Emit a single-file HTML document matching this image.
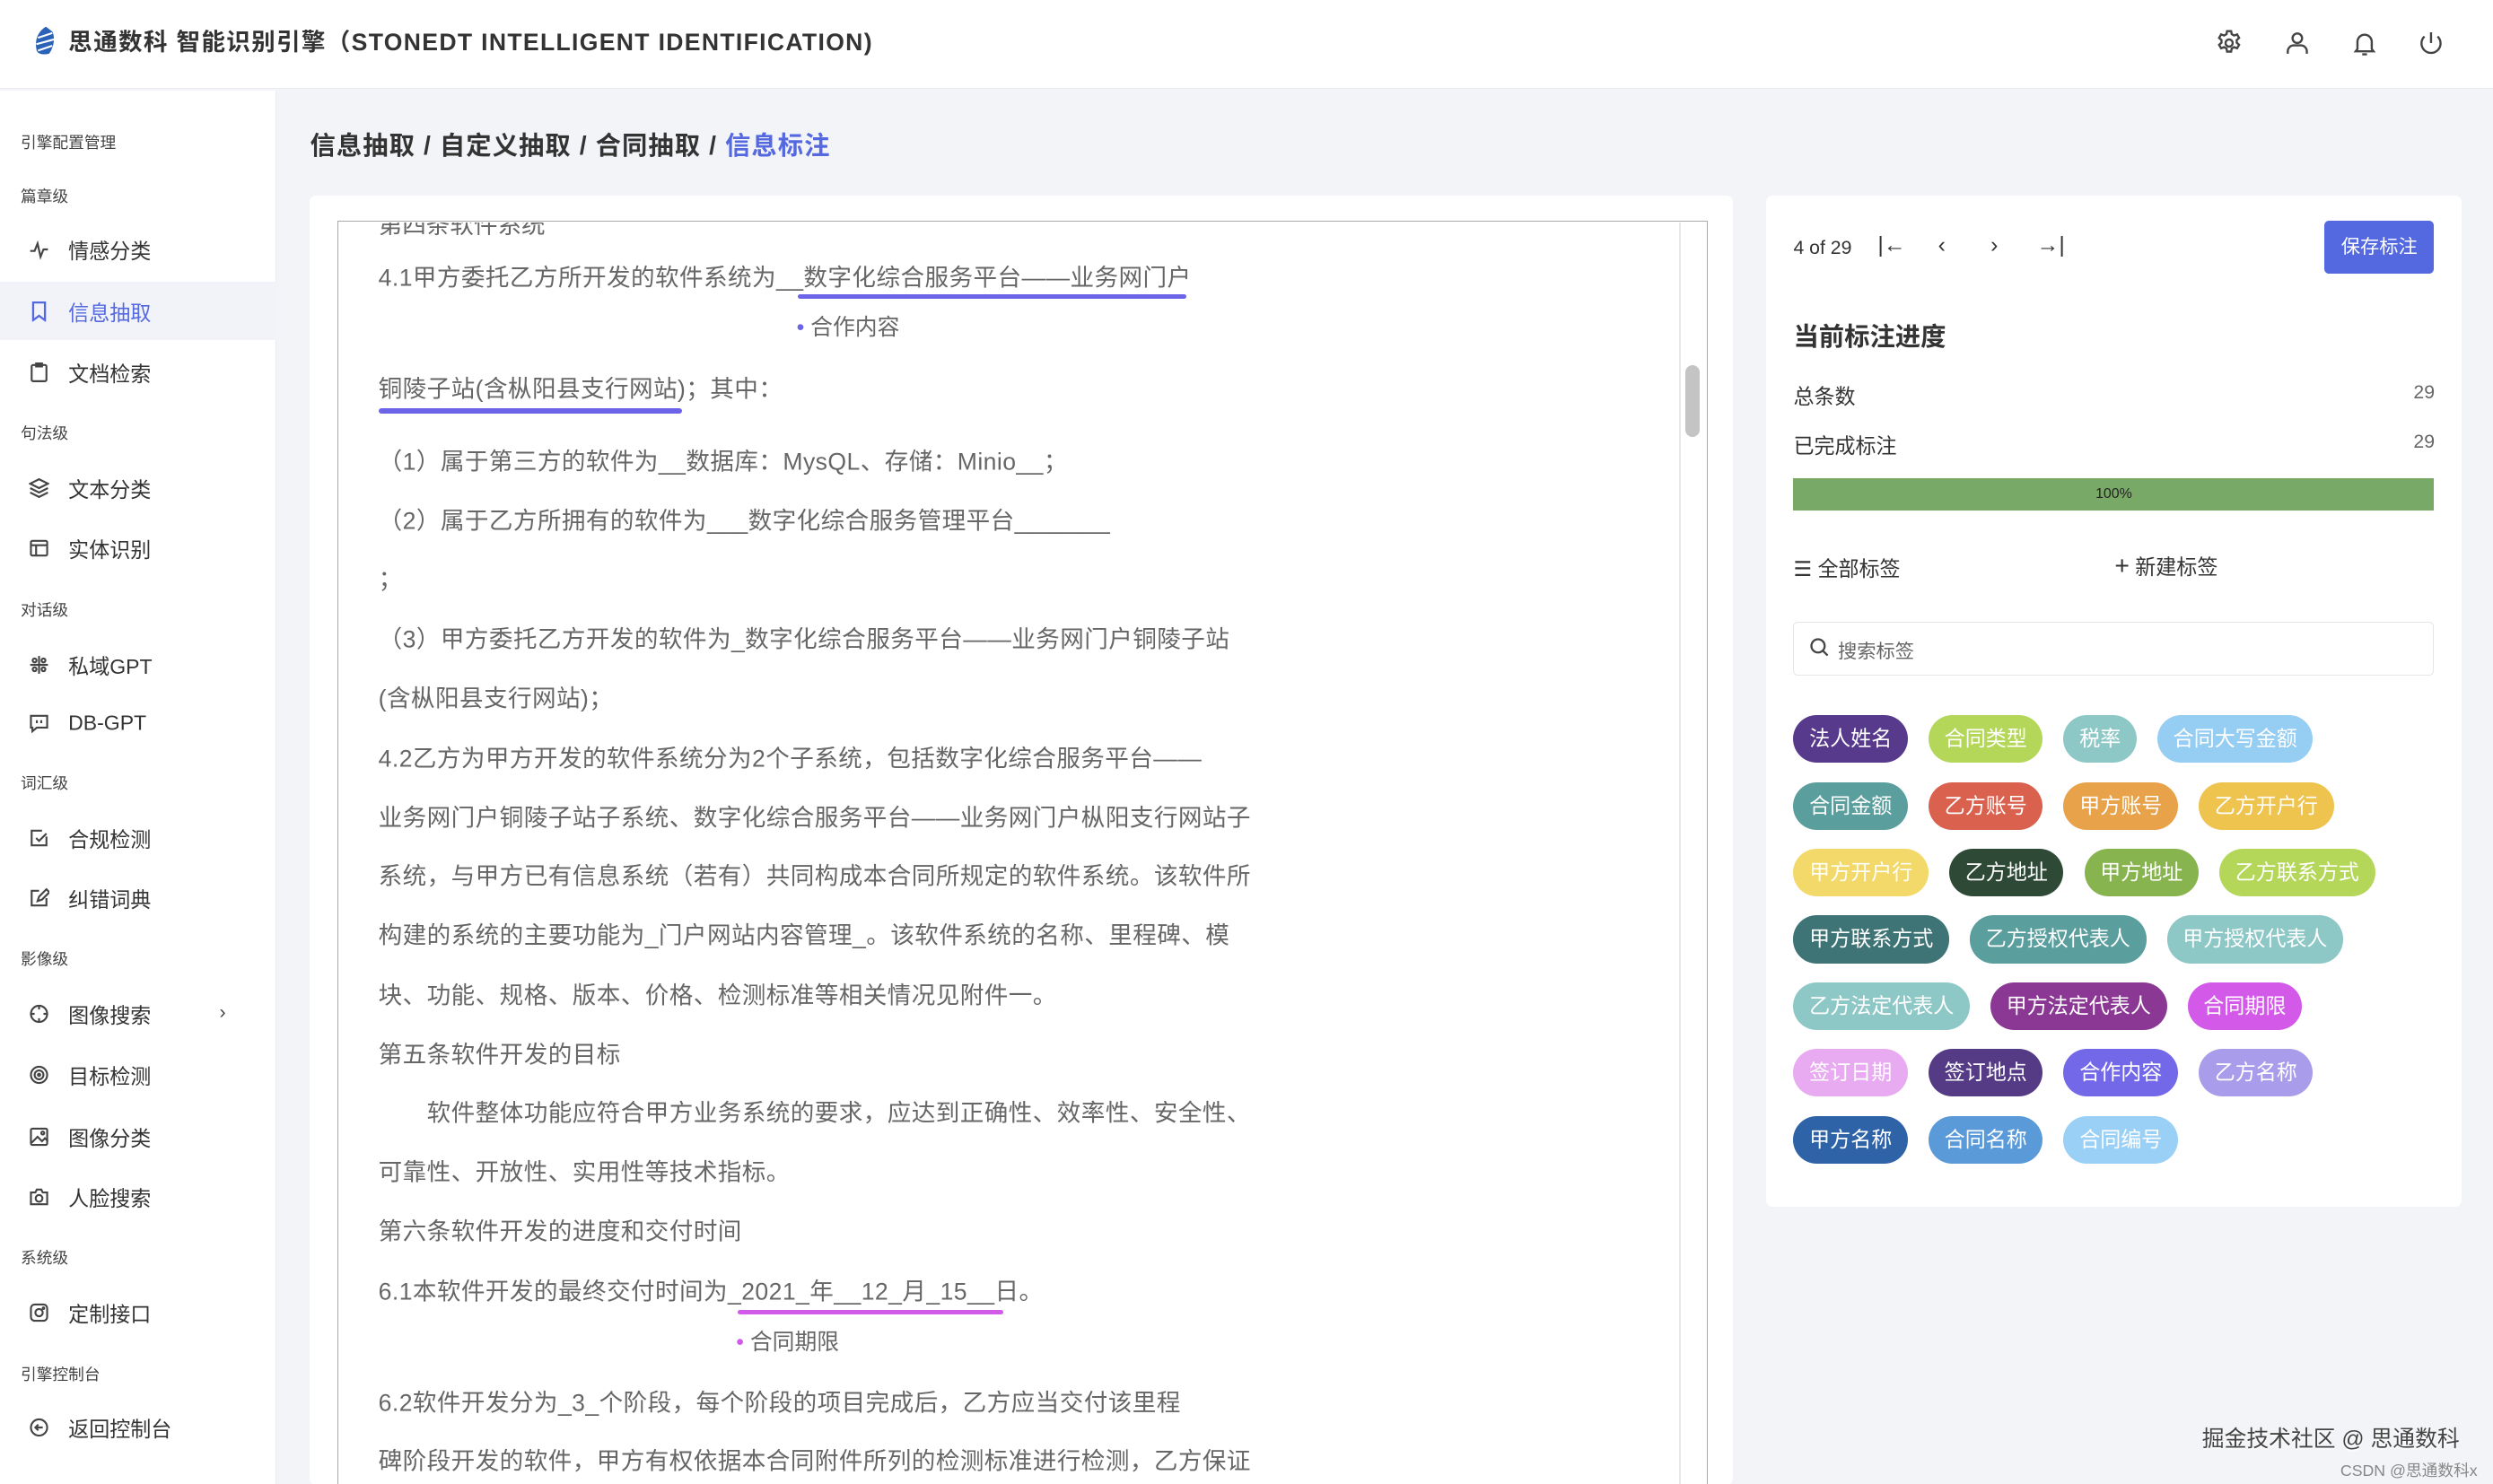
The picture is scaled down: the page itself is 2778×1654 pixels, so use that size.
<!DOCTYPE html>
<html><head><meta charset="utf-8"><style>
*{margin:0;padding:0;box-sizing:border-box}
html,body{width:2778px;height:1654px;overflow:hidden;background:#f3f4f8}
#w{width:1568px;height:934px;zoom:1.77168;position:relative;font-family:"Liberation Sans","Noto Sans CJK SC",sans-serif;background:#f3f4f8;overflow:hidden}
.a{position:absolute;white-space:nowrap}
#hd{position:absolute;left:0;top:0;width:1568px;height:56px;background:#fff;border-bottom:1px solid #ececf0}
#sb{position:absolute;left:0;top:57px;width:174px;height:877px;background:#fff;border-right:1px solid #ececf0}
.sec{position:absolute;left:13px;font-size:10px;color:#444;transform:translateY(-50%)}
.it{position:absolute;left:43px;font-size:13px;color:#333;transform:translateY(-50%)}
.ic{position:absolute;left:18px;width:13px;height:13px;transform:translateY(-50%)}
.t{position:absolute;left:238px;font-size:15px;color:#666;transform:translateY(-50%);white-space:nowrap;letter-spacing:0.25px}
.tag{display:inline-block;height:30px;line-height:30px;padding:0 10px;border-radius:15px;color:#fff;font-size:13px;margin:0 13px 12px 0}
</style></head><body><div id="w">
<div id="hd">
<svg class="a" style="left:21px;top:16px" width="15" height="20" viewBox="0 0 15 20"><path d="M8 1 C3 4 1 9 2 15 C2 18 6 19 10 18 C13 14 14 8 12 4 Z" fill="#2a62b8"/><path d="M3 8 L12 5 M2 12 L13 9 M3 16 L12 13" stroke="#fff" stroke-width="1.2"/></svg>
<div class="a" style="left:43px;top:14px;font-size:15px;color:#333;font-weight:bold;letter-spacing:0.75px">思通数科 智能识别引擎（STONEDT INTELLIGENT IDENTIFICATION)</div>
<svg class="a" style="left:1393px;top:18px" width="18" height="18" viewBox="0 0 24 24" fill="none" stroke="#444" stroke-width="1.8"><circle cx="12" cy="12" r="3"/><path d="M10.3 2h3.4l.5 2.6 2 1.1 2.5-.9 1.7 2.9-2 1.8v2.2l2 1.8-1.7 2.9-2.5-.9-2 1.1-.5 2.6h-3.4l-.5-2.6-2-1.1-2.5.9-1.7-2.9 2-1.8v-2.2l-2-1.8 1.7-2.9 2.5.9 2-1.1z"/></svg>
<svg class="a" style="left:1436px;top:18px" width="18" height="18" viewBox="0 0 24 24" fill="none" stroke="#444" stroke-width="1.8"><circle cx="12" cy="8" r="4"/><path d="M4 21v-2a5 5 0 0 1 5-5h6a5 5 0 0 1 5 5v2"/></svg>
<svg class="a" style="left:1478px;top:18px" width="18" height="18" viewBox="0 0 24 24" fill="none" stroke="#444" stroke-width="1.8"><path d="M6 17V11a6 6 0 0 1 12 0v6l1.5 2h-15z"/><path d="M10 21.5h4"/></svg>
<svg class="a" style="left:1520px;top:18px" width="18" height="18" viewBox="0 0 24 24" fill="none" stroke="#444" stroke-width="1.8"><path d="M12 3v9"/><path d="M6.5 6.5a8 8 0 1 0 11 0"/></svg>
</div>
<div id="sb"></div>
<div class="a" style="left:0;top:177px;width:174px;height:37px;background:#f1f3f9"></div>
<div class="sec" style="top:89px">引擎配置管理</div>
<div class="sec" style="top:123px">篇章级</div>
<svg class="ic" style="top:157px" viewBox="0 0 14 14" fill="none" stroke="#444" stroke-width="1.3"><path d="M1 8h3l2-5 2 9 2-5h3"/></svg><div class="it" style="top:157px">情感分类</div>
<svg class="ic" style="top:196px" viewBox="0 0 14 14" fill="none" stroke="#5468e0" stroke-width="1.4"><path d="M3 1h8v12l-4-3-4 3z"/></svg><div class="it" style="top:196px;color:#5468e0">信息抽取</div>
<svg class="ic" style="top:234px" viewBox="0 0 14 14" fill="none" stroke="#444" stroke-width="1.3"><rect x="2" y="2" width="10" height="11" rx="1"/><path d="M5 1h4v2H5z"/></svg><div class="it" style="top:234px">文档检索</div>
<div class="sec" style="top:272px">句法级</div>
<svg class="ic" style="top:307px" viewBox="0 0 14 14" fill="none" stroke="#444" stroke-width="1.3"><path d="M7 1l6 3-6 3-6-3z M1 7l6 3 6-3 M1 10l6 3 6-3"/></svg><div class="it" style="top:307px">文本分类</div>
<svg class="ic" style="top:345px" viewBox="0 0 14 14" fill="none" stroke="#444" stroke-width="1.3"><rect x="1.5" y="2" width="11" height="10" rx="1"/><path d="M1.5 5h11M5 5v7"/></svg><div class="it" style="top:345px">实体识别</div>
<div class="sec" style="top:383px">对话级</div>
<svg class="ic" style="top:418px" viewBox="0 0 14 14" fill="none" stroke="#444" stroke-width="1.3"><circle cx="4" cy="4" r="1.3"/><circle cx="10" cy="4" r="1.3"/><circle cx="4" cy="10" r="1.3"/><circle cx="10" cy="10" r="1.3"/><path d="M7 1v12M1 7h12"/></svg><div class="it" style="top:418px">私域GPT</div>
<svg class="ic" style="top:455px" viewBox="0 0 14 14" fill="none" stroke="#444" stroke-width="1.3"><path d="M1.5 2h11v8h-7l-3 2.5v-2.5h-1z"/><path d="M5.5 5v2M8.5 5v2"/></svg><div class="it" style="top:455px">DB-GPT</div>
<div class="sec" style="top:492px">词汇级</div>
<svg class="ic" style="top:527px" viewBox="0 0 14 14" fill="none" stroke="#444" stroke-width="1.3"><path d="M12 6v6H2V2h7"/><path d="M5 7l2 2 5-5"/></svg><div class="it" style="top:527px">合规检测</div>
<svg class="ic" style="top:565px" viewBox="0 0 14 14" fill="none" stroke="#444" stroke-width="1.3"><path d="M12 7v5H2V2h5"/><path d="M6 9l1-3 5-5 2 2-5 5z"/></svg><div class="it" style="top:565px">纠错词典</div>
<div class="sec" style="top:603px">影像级</div>
<svg class="ic" style="top:638px" viewBox="0 0 14 14" fill="none" stroke="#444" stroke-width="1.3"><circle cx="7" cy="7" r="5.5"/><path d="M7 1v3M7 10v3M1 7h3M10 7h3"/></svg><div class="it" style="top:638px">图像搜索</div>
<div class="a" style="left:138px;top:630px;font-size:12px;color:#444">›</div>
<svg class="ic" style="top:676px" viewBox="0 0 14 14" fill="none" stroke="#444" stroke-width="1.3"><circle cx="7" cy="7" r="5.5"/><circle cx="7" cy="7" r="3"/><circle cx="7" cy="7" r="0.8"/></svg><div class="it" style="top:676px">目标检测</div>
<svg class="ic" style="top:715px" viewBox="0 0 14 14" fill="none" stroke="#444" stroke-width="1.3"><rect x="1.5" y="1.5" width="11" height="11" rx="1"/><path d="M2 11l4-4 3 3 2-2 2 2"/><circle cx="9.5" cy="4.5" r="1"/></svg><div class="it" style="top:715px">图像分类</div>
<svg class="ic" style="top:753px" viewBox="0 0 14 14" fill="none" stroke="#444" stroke-width="1.3"><path d="M1.5 4h3l1-2h3l1 2h3v8h-11z"/><circle cx="7" cy="8" r="2.3"/></svg><div class="it" style="top:753px">人脸搜索</div>
<div class="sec" style="top:791px">系统级</div>
<svg class="ic" style="top:826px" viewBox="0 0 14 14" fill="none" stroke="#444" stroke-width="1.3"><rect x="1.5" y="1.5" width="11" height="11" rx="2.5"/><circle cx="7" cy="7" r="2.5"/><circle cx="10" cy="4" r="0.5"/></svg><div class="it" style="top:826px">定制接口</div>
<div class="sec" style="top:864px">引擎控制台</div>
<svg class="ic" style="top:898px" viewBox="0 0 14 14" fill="none" stroke="#444" stroke-width="1.3"><circle cx="7" cy="7" r="5.5"/><path d="M9.5 7h-5M6.5 5l-2 2 2 2"/></svg><div class="it" style="top:898px">返回控制台</div>

<div class="a" style="left:195px;top:79px;font-size:16px;font-weight:bold;color:#333;letter-spacing:0.6px">信息抽取 / 自定义抽取 / 合同抽取 / <span style="color:#5468e0">信息标注</span></div>

<div class="a" style="left:195px;top:123px;width:895px;height:811px;background:#fff;border-radius:4px"></div>
<div class="a" style="left:212px;top:139px;width:862px;height:800px;border:1px solid #aaa;border-bottom:none;background:#fff;overflow:hidden"></div>
<div class="a" style="left:1056px;top:140px;width:1px;height:794px;background:#e8e8e8"></div>
<div class="a" style="left:1060px;top:230px;width:9px;height:45px;border-radius:5px;background:#c4c4c4"></div>
<div class="a" style="left:213px;top:140px;width:840px;height:8px;overflow:hidden"><div style="position:absolute;left:25px;top:-11px;font-size:15px;color:#666">第四条软件系统</div></div>
<div class="t" style="top:173px">4.1甲方委托乙方所开发的软件系统为__数字化综合服务平台——业务网门户</div>
<div class="a" style="left:502px;top:185px;width:244px;height:3px;border-radius:2px;background:#6c64e8"></div>
<div class="a" style="left:501px;top:195px;font-size:14px;color:#666"><span style="color:#6c64e8">•</span> 合作内容</div>
<div class="t" style="top:243px">铜陵子站(含枞阳县支行网站)；其中：</div>
<div class="a" style="left:238px;top:257px;width:191px;height:3px;border-radius:2px;background:#6c64e8"></div>
<div class="t" style="top:289px">（1）属于第三方的软件为__数据库：MysQL、存储：Minio__；</div>
<div class="t" style="top:326px">（2）属于乙方所拥有的软件为___数字化综合服务管理平台_______</div>
<div class="t" style="top:363px">；</div>
<div class="t" style="top:401px">（3）甲方委托乙方开发的软件为_数字化综合服务平台——业务网门户铜陵子站</div>
<div class="t" style="top:438px">(含枞阳县支行网站)；</div>
<div class="t" style="top:476px">4.2乙方为甲方开发的软件系统分为2个子系统，包括数字化综合服务平台——</div>
<div class="t" style="top:513px">业务网门户铜陵子站子系统、数字化综合服务平台——业务网门户枞阳支行网站子</div>
<div class="t" style="top:550px">系统，与甲方已有信息系统（若有）共同构成本合同所规定的软件系统。该软件所</div>
<div class="t" style="top:587px">构建的系统的主要功能为_门户网站内容管理_。该软件系统的名称、里程碑、模</div>
<div class="t" style="top:625px">块、功能、规格、版本、价格、检测标准等相关情况见附件一。</div>
<div class="t" style="top:662px">第五条软件开发的目标</div>
<div class="t" style="top:699px">　　软件整体功能应符合甲方业务系统的要求，应达到正确性、效率性、安全性、</div>
<div class="t" style="top:736px">可靠性、开放性、实用性等技术指标。</div>
<div class="t" style="top:773px">第六条软件开发的进度和交付时间</div>
<div class="t" style="top:811px">6.1本软件开发的最终交付时间为_2021_年__12_月_15__日。</div>
<div class="a" style="left:464px;top:824px;width:167px;height:3px;border-radius:2px;background:#d25ae8"></div>
<div class="a" style="left:463px;top:833px;font-size:14px;color:#666"><span style="color:#d25ae8">•</span> 合同期限</div>
<div class="t" style="top:881px">6.2软件开发分为_3_个阶段，每个阶段的项目完成后，乙方应当交付该里程</div>
<div class="t" style="top:918px">碑阶段开发的软件，甲方有权依据本合同附件所列的检测标准进行检测，乙方保证</div>

<div class="a" style="left:1111px;top:123px;width:437px;height:636px;background:#fff;border-radius:4px"></div>
<div class="a" style="left:1128px;top:149px;font-size:12px;color:#333">4 of 29</div>
<div class="a" style="left:1181px;top:147px;font-size:14px;color:#333">|←</div>
<div class="a" style="left:1219px;top:147px;font-size:14px;color:#333">‹</div>
<div class="a" style="left:1252px;top:147px;font-size:14px;color:#333">›</div>
<div class="a" style="left:1281px;top:147px;font-size:14px;color:#333">→|</div>
<div class="a" style="left:1462px;top:139px;width:69px;height:33px;border-radius:3px;background:#5468e0;color:#fff;font-size:12px;line-height:33px;text-align:center">保存标注</div>
<div class="a" style="left:1128px;top:199px;font-size:16px;font-weight:bold;color:#333">当前标注进度</div>
<div class="a" style="left:1128px;top:239px;font-size:13px;color:#333">总条数</div>
<div class="a" style="left:1518px;top:240px;font-size:12px;color:#666">29</div>
<div class="a" style="left:1128px;top:270px;font-size:13px;color:#333">已完成标注</div>
<div class="a" style="left:1518px;top:271px;font-size:12px;color:#666">29</div>
<div class="a" style="left:1128px;top:301px;width:403px;height:20px;background:#79a966;color:#222;font-size:9px;text-align:center;line-height:20px">100%</div>
<div class="a" style="left:1128px;top:347px;font-size:13px;color:#333">☰ 全部标签</div>
<div class="a" style="left:1330px;top:346px;font-size:13px;color:#333"><span style="font-size:16px">+</span> 新建标签</div>
<div class="a" style="left:1128px;top:391px;width:403px;height:34px;border:1px solid #e6e6e6;border-radius:3px"></div>
<svg class="a" style="left:1138px;top:401px" width="13" height="13" viewBox="0 0 14 14" fill="none" stroke="#444" stroke-width="1.4"><circle cx="6" cy="6" r="4.5"/><path d="M9.5 9.5l3 3"/></svg>
<div class="a" style="left:1156px;top:400px;font-size:12px;color:#666">搜索标签</div>
<div class="a" style="left:1128px;top:450px;width:410px;white-space:normal">
<span class="tag" style="background:#573a8c">法人姓名</span><span class="tag" style="background:#b4d75a">合同类型</span><span class="tag" style="background:#8ec8c6">税率</span><span class="tag" style="background:#95cdf3">合同大写金额</span><br>
<span class="tag" style="background:#5a9e9d">合同金额</span><span class="tag" style="background:#d9614e">乙方账号</span><span class="tag" style="background:#e8a24a">甲方账号</span><span class="tag" style="background:#eec34e">乙方开户行</span><br>
<span class="tag" style="background:#f2d96a">甲方开户行</span><span class="tag" style="background:#2e4a36">乙方地址</span><span class="tag" style="background:#88b450">甲方地址</span><span class="tag" style="background:#b4d75a">乙方联系方式</span><br>
<span class="tag" style="background:#3f7476">甲方联系方式</span><span class="tag" style="background:#5a9e9d">乙方授权代表人</span><span class="tag" style="background:#8ec8c6">甲方授权代表人</span><br>
<span class="tag" style="background:#8ec8c6">乙方法定代表人</span><span class="tag" style="background:#8b3895">甲方法定代表人</span><span class="tag" style="background:#d35ae8">合同期限</span><br>
<span class="tag" style="background:#e8aaf0">签订日期</span><span class="tag" style="background:#553b86">签订地点</span><span class="tag" style="background:#7369e8">合作内容</span><span class="tag" style="background:#a99ceb">乙方名称</span><br>
<span class="tag" style="background:#2f63a8">甲方名称</span><span class="tag" style="background:#5a9ad8">合同名称</span><span class="tag" style="background:#9ad0f5">合同编号</span>
</div>
<div class="a" style="left:1385px;top:894px;font-size:14px;color:#444;text-shadow:0 1px 1px #fff">掘金技术社区 @ 思通数科</div>
<div class="a" style="left:1472px;top:917px;font-size:10px;color:#888">CSDN @思通数科x</div>
</div></body></html>
